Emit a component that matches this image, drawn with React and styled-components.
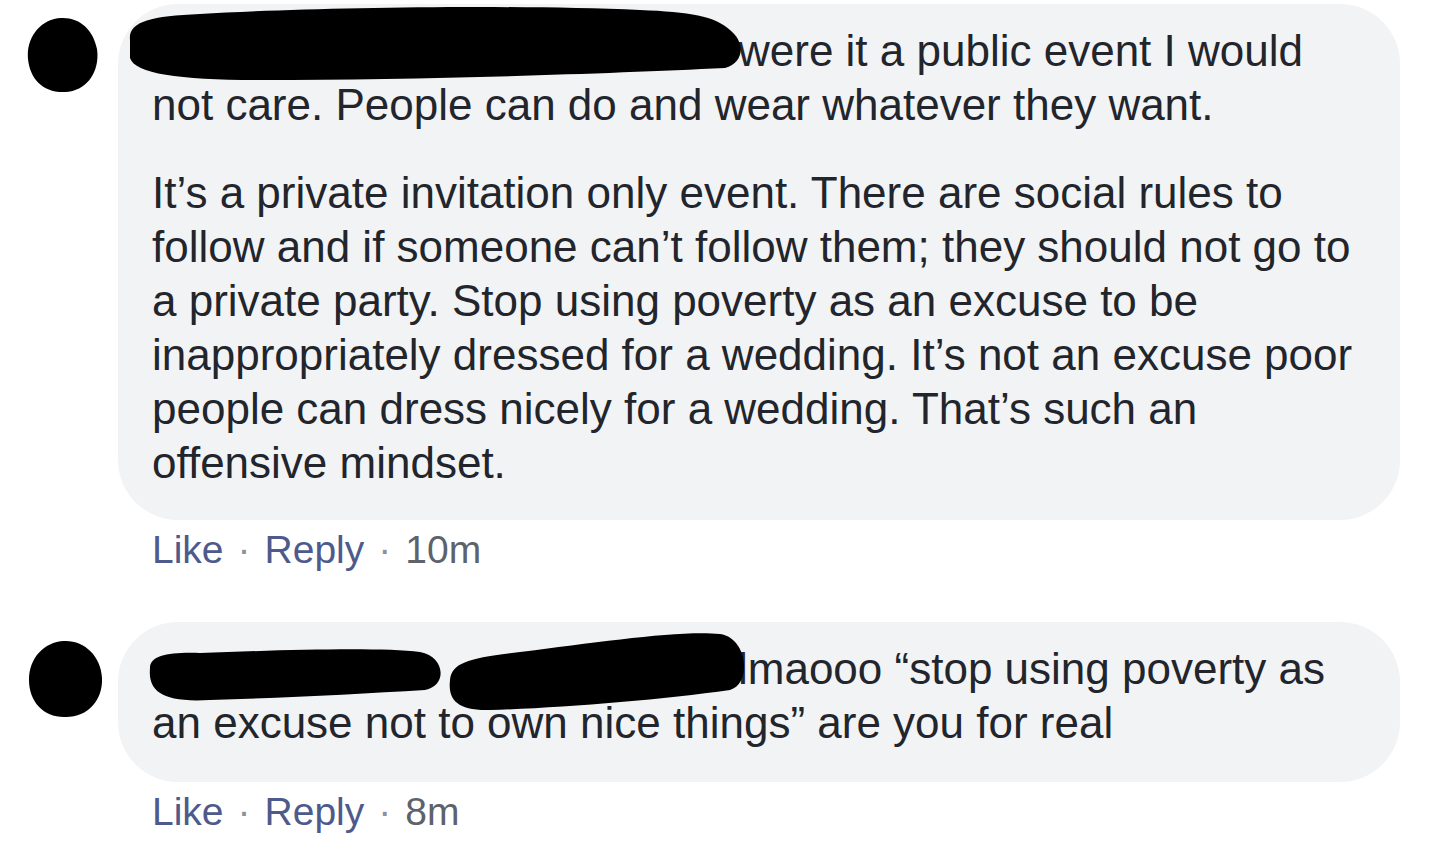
import React from "react";
import styled, { createGlobalStyle } from "styled-components";

const GlobalStyle = createGlobalStyle`
  html, body {
    margin: 0;
    padding: 0;
    background: #ffffff;
  }
  body {
    font-family: "Liberation Sans", Arial, Helvetica, sans-serif;
    -webkit-font-smoothing: antialiased;
  }
`;

const Page = styled.div`
  width: 1440px;
  height: 852px;
  overflow: hidden;
  box-sizing: border-box;
  padding-top: 4px;
  display: flex;
  flex-direction: column;
  gap: 48px;
  background: #ffffff;
`;

const Comment = styled.div`
  display: flex;
  align-items: flex-start;
`;

const AvatarCol = styled.div`
  width: 118px;
  flex-shrink: 0;
  box-sizing: border-box;
  padding: ${(p) => p.$top}px 0 0 ${(p) => p.$left}px;
`;

const AvatarMark = styled.svg`
  display: block;
`;

const Body = styled.div`
  width: 1282px;
  display: flex;
  flex-direction: column;
`;

const Bubble = styled.div`
  background: #f2f3f5;
  border-radius: 60px;
  padding: 20px 38px ${(p) => p.$bottom}px 34px;
  font-size: 44px;
  line-height: 54px;
  color: #22252b;
`;

const Para = styled.p`
  margin: 0;
  & + & {
    margin-top: 34px;
  }
`;

const Redaction = styled.svg`
  display: inline-block;
  vertical-align: top;
  overflow: visible;
  position: relative;
  z-index: 1;
`;

const Actions = styled.div`
  display: flex;
  margin-top: 6px;
  padding-left: 34px;
  font-size: 39px;
  line-height: 48px;
`;

const ActionLink = styled.span`
  color: #4e5a8b;
`;

const Sep = styled.span`
  color: #8d9199;
  padding: 0 14px;
`;

const Time = styled.span`
  color: #5d626b;
`;

function Avatar({ w, h, d, top, left }) {
  return (
    <AvatarCol $top={top} $left={left}>
      <AvatarMark width={w} height={h} viewBox={`0 0 ${w} ${h}`}>
        <path d={d} fill="#000" />
      </AvatarMark>
    </AvatarCol>
  );
}

function Blot({ width, paths }) {
  return (
    <Redaction width={width} height={54} viewBox={`0 0 ${width} 54`}>
      {paths.map((d, i) => (
        <path key={i} d={d} fill="#000" />
      ))}
    </Redaction>
  );
}

function ActionRow({ time }) {
  return (
    <Actions>
      <ActionLink>Like</ActionLink>
      <Sep>·</Sep>
      <ActionLink>Reply</ActionLink>
      <Sep>·</Sep>
      <Time>{time}</Time>
    </Actions>
  );
}

export default function App() {
  return (
    <>
      <GlobalStyle />
      <Page>
        <Comment>
          <Avatar
            w={72}
            h={76}
            top={13}
            left={27}
            d="M34,1 C52,0 66,12 70,32 C73,52 62,74 38,75 C16,76 3,62 1,42 C-1,20 14,2 34,1 Z"
          />
          <Body>
            <Bubble $bottom={30}>
              <Para>
                <Blot
                  width={586}
                  paths={[
                    "M-22,16 C-24,-2 -2,-8 48,-10 C148,-16 348,-20 488,-14 C538,-12 563,-8 578,6 C593,18 593,38 573,44 C448,50 268,56 108,56 C28,56 -17,50 -22,34 Z",
                  ]}
                />
                were it a public event I would not care. People can do and wear
                whatever they want.
              </Para>
              <Para>
                It’s a private invitation only event. There are social rules to
                follow and if someone can’t follow them; they should not go to a
                private party. Stop using poverty as an excuse to be
                inappropriately dressed for a wedding. It’s not an excuse poor
                people can dress nicely for a wedding. That’s such an offensive
                mindset.
              </Para>
            </Bubble>
            <ActionRow time="10m" />
          </Body>
        </Comment>

        <Comment>
          <Avatar
            w={75}
            h={78}
            top={18}
            left={28}
            d="M36,1 C56,0 73,16 74,38 C75,60 60,77 38,77 C16,78 1,62 1,40 C1,18 16,2 36,1 Z"
          />
          <Body>
            <Bubble $bottom={32}>
              <Para>
                <Blot
                  width={586}
                  paths={[
                    "M-2,26 C-2,13 18,10 48,11 C128,8 228,5 268,10 C293,14 296,44 273,48 C208,52 128,56 58,58 C8,61 -4,48 -2,26 Z",
                    "M298,38 C300,20 318,16 368,10 C448,0 528,-12 568,-8 C596,-4 600,42 578,48 C508,58 408,66 338,68 C303,69 296,56 298,38 Z",
                  ]}
                />
                lmaooo “stop using poverty as an excuse not to own nice things”
                are you for real
              </Para>
            </Bubble>
            <ActionRow time="8m" />
          </Body>
        </Comment>
      </Page>
    </>
  );
}
